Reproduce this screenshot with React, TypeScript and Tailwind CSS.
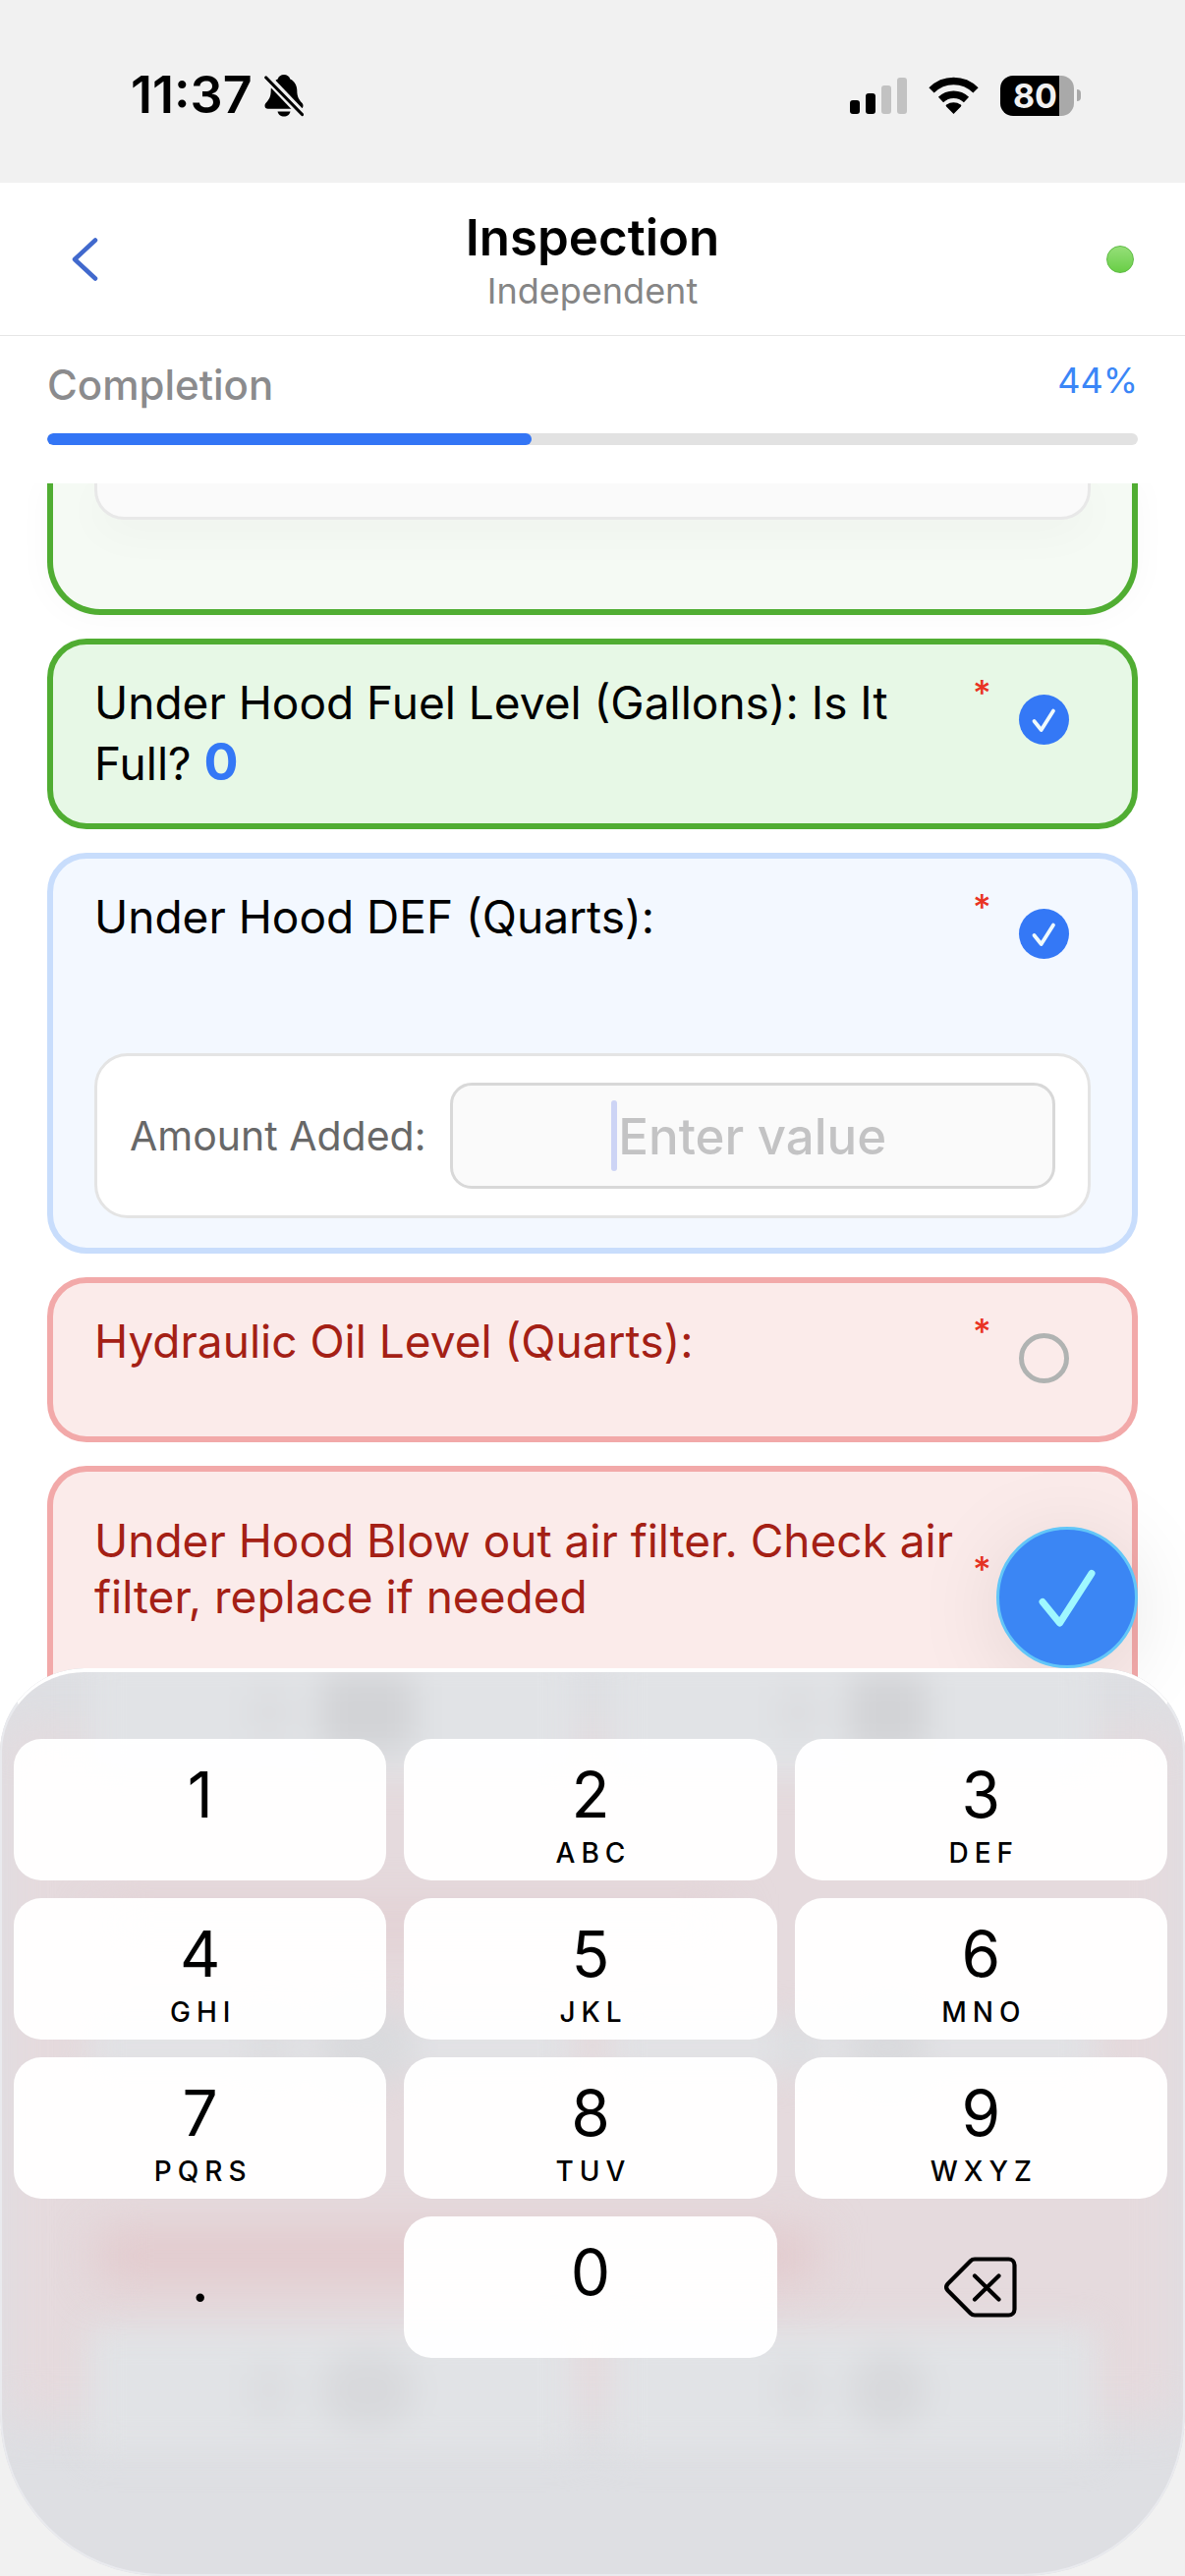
import React, { FC, ReactNode, useState } from 'react'

interface CardProps {
  tone: 'done' | 'active' | 'missing',
  className?: string,
  children: ReactNode,
}

interface TickProps {
  label: string,
  initial?: boolean,
}

interface KeyProps {
  digit: string,
  letters?: string,
}

const tones = {
  done: 'border-[#50ad32] bg-[#e7f8e6] text-black',
  active: 'border-[#c8ddfc] bg-[#f3f8ff] text-black',
  missing: 'border-[#f2a9a9] bg-[#fbebea] text-[#a42015]',
}

const keys: KeyProps[] = [
  { digit: '1' },
  { digit: '2', letters: 'ABC' },
  { digit: '3', letters: 'DEF' },
  { digit: '4', letters: 'GHI' },
  { digit: '5', letters: 'JKL' },
  { digit: '6', letters: 'MNO' },
  { digit: '7', letters: 'PQRS' },
  { digit: '8', letters: 'TUV' },
  { digit: '9', letters: 'WXYZ' },
]

const StatusBar: FC = () => (
  <div className="flex h-[186px] shrink-0 items-center justify-between bg-[#f1f1f1] pt-2 pr-[106px] pl-[133px]">
    <div className="flex items-center gap-3">
      <span className="text-[52px] leading-[60px] font-semibold text-black">11:37</span>
      <svg className="h-11 w-10" viewBox="0 0 40 44">
        <path d="M20 1c3 0 5.500 1.600 6.300 4.500 4.500 2 7 6.500 7 11.500 0 7 2.200 9.500 4.800 12.500 1 1.200 1.400 2 1.400 3.200 0 1.800-1.300 3-3.300 3H3.800c-2 0-3.300-1.200-3.300-3 0-1.200.4-2 1.400-3.200C4.500 26.500 6.700 24 6.700 17c0-5 2.500-9.500 7-11.500C14.500 2.600 17 1 20 1z" />
        <path d="M13.500 38.500h13c-.6 3-3.200 5-6.500 5s-5.900-2-6.500-5z" />
        <path d="M0 1L40 43" stroke="#f1f1f1" strokeWidth="8.500" />
        <path d="M1.800 4L38.500 41.500" stroke="#000" strokeWidth="3.200" strokeLinecap="round" />
      </svg>
    </div>
    <div className="flex items-center gap-[22px]">
      <svg className="h-[38px] w-[58px]" viewBox="0 0 58 38">
        <rect x="0" y="24" width="10" height="14" rx="3" />
        <rect x="16" y="17" width="10" height="21" rx="3" />
        <rect x="32" y="9" width="10" height="29" rx="3" fill="#c2c2c2" />
        <rect x="48" y="1" width="10" height="37" rx="3" fill="#c2c2c2" />
      </svg>
      <svg className="h-[38px] w-[51px]" viewBox="0 0 51 38">
        <path d="M25.500 38l-7.400-7.600c-.6-.6-.6-1.300.1-1.800 4.200-3.300 10.400-3.300 14.600 0 .7.500.7 1.200.1 1.800z" />
        <path d="M12.500 23.500c7.400-7 18.600-7 26 0" fill="none" stroke="#000" strokeWidth="7.500" />
        <path d="M3 13.800c12.700-12.500 32.300-12.500 45 0" fill="none" stroke="#000" strokeWidth="7.500" />
      </svg>
      <div className="flex items-center gap-[3px]">
        <div className="flex h-[41px] w-[75px] items-center justify-center overflow-hidden rounded-[13px] bg-linear-to-r from-black from-80% to-[#a9a9a9] to-80% pr-1">
          <span className="text-[34px] leading-[41px] font-bold text-[#f1f1f1]">80</span>
        </div>
        <div className="h-3 w-1 rounded-r-full bg-[#a9a9a9]" />
      </div>
    </div>
  </div>
)

const Card: FC<CardProps> = ({ tone, className = 'pt-7 pb-8', children }) => (
  <section className={`rounded-[40px] border-6 px-[42px] text-[46px] leading-[62px] ${tones[tone]} ${className}`}>
    {children}
  </section>
)

const Required: FC = () => (
  <span className="w-6 shrink-0 text-[36px] leading-[43px] font-medium text-[#e93323]">*</span>
)

const Tick: FC<TickProps> = ({ label, initial = false }) => {
  const [checked, setChecked] = useState(initial)

  return (
    <label className="grid size-24 shrink-0 place-items-center">
      <input
        type="checkbox"
        aria-label={label}
        checked={checked}
        onChange={() => setChecked(!checked)}
        className="col-start-1 row-start-1 size-[51px] appearance-none rounded-full border-[5px] border-[#b0b3b2] checked:border-0 checked:bg-[#3478f6]"
      />
      {checked && (
        <svg className="pointer-events-none col-start-1 row-start-1 size-[51px]" viewBox="0 0 51 51">
          <path d="M15.500 27l7.200 9L35 16.500" fill="none" stroke="#f0fafc" strokeWidth="3.800" strokeLinecap="round" strokeLinejoin="round" />
        </svg>
      )}
    </label>
  )
}

const Key: FC<KeyProps> = ({ digit, letters }) => (
  <button className="flex h-36 flex-col items-center rounded-[28px] bg-white/97 pt-6 text-black">
    <span className="text-[64px] leading-[66px]">{digit}</span>
    {letters && <span className="pt-2 pl-[6px] text-[28px] leading-[36px] font-medium tracking-[6px]">{letters}</span>}
  </button>
)

// What shows through the frosted keyboard: pink cards with a pair of white buttons each
const frostRows = [
  { place: 'top-[-20px] h-[130px]', blob: 'rounded-2xl bg-[#d2d3d6]' },
  { place: 'top-[360px] h-[50px]', blob: 'rounded-full bg-[#d9dadd]' },
  { place: 'top-[670px] h-[130px]', blob: 'rounded-full bg-[#d8d9dc]' },
]

const Frost: FC = () => (
  <div aria-hidden="true" className="absolute inset-0 overflow-hidden rounded-t-[86px] rounded-b-[165px] bg-[#dedfe3]">
    <div className="absolute inset-x-1 top-16 h-[700px] bg-[#e5dadd] blur-xl" />
    {frostRows.map(({ place, blob }) => (
      <div key={place} className={`absolute inset-x-[90px] flex gap-[34px] blur-lg ${place}`}>
        <div className="flex flex-1 items-center justify-center gap-8 bg-[#e1e3e6]">
          <div className="h-16 w-10 rounded-full bg-[#dcdde0]" />
          <div className={`h-20 w-24 ${blob}`} />
        </div>
        <div className="flex flex-1 items-center justify-center gap-8 bg-[#e1e3e6]">
          <div className="h-16 w-10 rounded-full bg-[#dcdde0]" />
          <div className={`h-20 w-20 ${blob}`} />
        </div>
      </div>
    ))}
    <div className="absolute top-[245px] left-[100px] h-8 w-[640px] bg-[#e2cdd0] blur-xl" />
    <div className="absolute top-[574px] left-[100px] h-12 w-[730px] bg-[#e2c8cb] blur-xl" />
    <div className="absolute inset-0 rounded-t-[86px] rounded-b-[165px] border-2 border-[#e9eaee] border-t-4 border-t-white" />
  </div>
)

const Keypad: FC = () => (
  <div className="relative w-full">
    <Frost />
    <div className="relative grid grid-cols-3 gap-[18px] pt-[72px] pr-[18px] pb-[222px] pl-[14px]">
      {keys.map((k) => <Key key={k.digit} {...k} />)}
      <button className="flex h-36 items-center justify-center pb-4 text-[64px] leading-[66px] text-black">.</button>
      <Key digit="0" />
      <button aria-label="Delete" className="flex h-36 items-center justify-center">
        <svg className="h-[62px] w-[74px]" viewBox="0 0 74 62" fill="none" stroke="#000" strokeWidth="4.200" strokeLinecap="round" strokeLinejoin="round">
          <path d="M31 2.500h34.500a6 6 0 0 1 6 6v45a6 6 0 0 1-6 6H31c-1.800 0-3-.5-4.200-1.700L3.700 34.500c-2-2.200-2-4.800 0-7L26.800 4.200C28 3 29.200 2.500 31 2.500z" />
          <path d="M31 19.500L55.500 43.500M55.500 19.500L31 43.500" />
        </svg>
      </button>
    </div>
  </div>
)

const App: FC = () => {
  const [amount, setAmount] = useState('')

  return (
    <div className="relative flex h-screen flex-col overflow-hidden bg-[#f1f1f1] font-['Inter',sans-serif]">
      <StatusBar />

      <header className="flex h-[156px] shrink-0 items-center justify-between border-b border-[#e6e6e6] bg-white pr-[52px] pl-[70px]">
        <button aria-label="Back" className="w-20">
          <svg className="h-12 w-8" viewBox="0 0 32 48">
            <path d="M27 4.500L6 24l21 19.500" fill="none" stroke="#4169cd" strokeWidth="4.500" strokeLinecap="round" strokeLinejoin="round" />
          </svg>
        </button>
        <div className="pt-1 text-center">
          <h1 className="text-[51px] leading-[60px] font-semibold text-black">Inspection</h1>
          <p className="text-[36px] leading-[48px] text-[#858585]">Independent</p>
        </div>
        <div className="flex w-[98px] justify-end">
          <span className="size-7 rounded-full border border-[#5fbb45] bg-linear-to-b from-[#95df78] to-[#68ce45]" />
        </div>
      </header>

      <div className="shrink-0 bg-white px-12 pt-6 pb-[39px]">
        <div className="flex items-start justify-between">
          <label htmlFor="completion" className="text-[42px] leading-[51px] font-medium text-[#8b8b8d]">Completion</label>
          <span className="text-[36px] leading-[43px] text-[#3a86f7]">44%</span>
        </div>
        <progress
          id="completion"
          value={44}
          max={99}
          className="mt-6 block h-3 w-full appearance-none overflow-hidden rounded-full [&::-webkit-progress-bar]:bg-[#e2e2e2] [&::-webkit-progress-value]:rounded-full [&::-webkit-progress-value]:bg-[#3375f5]"
        />
      </div>

      <main className="mb-[150px] flex flex-1 flex-col gap-6 overflow-hidden bg-white px-12">
        <section className="shrink-0 rounded-b-[54px] border-6 border-t-0 border-[#50ad32] bg-[#f5faf4] px-[42px] pb-[91px] shadow-[0_0_36px_rgba(0,0,0,0.03)]">
          <div className="h-[37px] rounded-b-[30px] border-3 border-t-0 border-[#e8e8e8] bg-[#fafafa] shadow-[0_12px_48px_rgba(0,0,0,0.035)]" />
        </section>

        <Card tone="done" className="pt-7 pb-[30px]">
          <div className="flex items-start">
            <p className="flex-1">
              Under Hood Fuel Level (Gallons): Is It{' '}
              <span className="whitespace-nowrap">Full? <b className="text-[52px] leading-none font-bold text-[#3478f6]">0</b></span>
            </p>
            <Required />
            <Tick label="Under Hood Fuel Level (Gallons)" initial />
          </div>
        </Card>

        <Card tone="active" className="pt-7 pb-[30px]">
          <div className="flex items-start">
            <p className="flex-1">Under Hood DEF (Quarts):</p>
            <Required />
            <Tick label="Under Hood DEF (Quarts)" initial />
          </div>
          <div className="mt-[74px] flex h-[168px] items-center gap-6 rounded-[34px] border-3 border-[#e4e4e4] bg-white px-[33px]">
            <label htmlFor="amount" className="shrink-0 text-[41px] leading-[51px] text-[#686868]">Amount Added:</label>
            <div className="relative min-w-0 flex-1">
              <input
                id="amount"
                inputMode="decimal"
                placeholder="Enter value"
                value={amount}
                onChange={(e) => setAmount(e.target.value)}
                className="block h-[108px] w-full rounded-[22px] border-3 border-[#d8d8d8] bg-[#fafafa] text-center text-[51px] font-medium text-black outline-none placeholder:text-[#c3c3c4]"
              />
              {!amount && <span className="absolute top-[18px] left-1/2 -ml-36 h-18 w-[6px] rounded-full bg-[#cdd4f5]" />}
            </div>
          </div>
        </Card>

        <Card tone="missing">
          <div className="flex items-start">
            <p className="flex-1">Hydraulic Oil Level (Quarts):</p>
            <Required />
            <Tick label="Hydraulic Oil Level (Quarts)" />
          </div>
        </Card>

        <Card tone="missing" className="flex-1 rounded-b-none border-b-0 pt-[42px]">
          <div className="flex items-center">
            <p className="flex-1 leading-[57px]">Under Hood Blow out air filter. Check air filter, replace if needed</p>
            <Required />
            <Tick label="Under Hood Blow out air filter" />
          </div>
        </Card>
      </main>

      <div className="absolute inset-x-0 bottom-0 flex flex-col items-end">
        <button aria-label="Done" className="mr-12 grid size-36 place-items-center rounded-full border-3 border-[#62c6f8] bg-[#3b86f4] shadow-[0_12px_90px_rgba(0,0,0,0.1)]">
          <svg className="size-16" viewBox="0 0 64 64">
            <path d="M7 36.500L24.500 58 57 7.500" fill="none" stroke="#9ff8ff" strokeWidth="7" strokeLinecap="round" strokeLinejoin="round" />
          </svg>
        </button>
        <Keypad />
      </div>
    </div>
  )
}

export default App
